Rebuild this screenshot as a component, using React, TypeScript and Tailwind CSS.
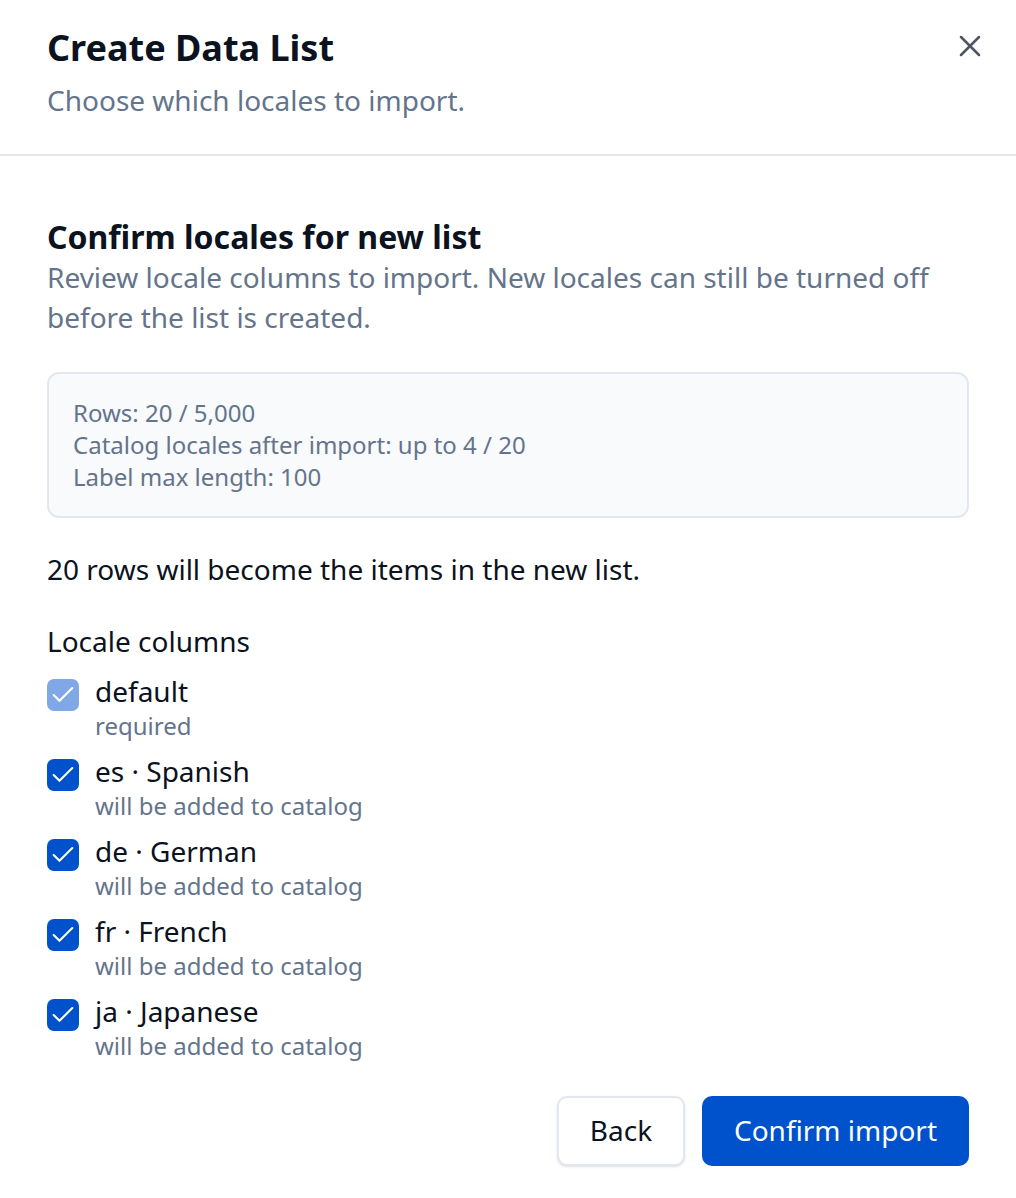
import { Check, X } from "lucide-react";

const locales = [
    { label: "default", note: "required", locked: true },
    { label: "es · Spanish", note: "will be added to catalog" },
    { label: "de · German", note: "will be added to catalog" },
    { label: "fr · French", note: "will be added to catalog" },
    { label: "ja · Japanese", note: "will be added to catalog" },
];

export default function App() {
    return (
        <div
            className="min-h-screen bg-white text-[#0b1220]"
            style={{ fontFamily: '"Noto Sans", "Open Sans", sans-serif' }}
        >
            {/* header */}
            <div className="flex items-start justify-between border-b-2 border-[#e5e7eb] px-[47px] pt-[26px] pb-[36px]">
                <div>
                    <h1 className="text-[36px] font-bold leading-[44px]">Create Data List</h1>
                    <p className="mt-[12px] text-[28px] leading-[36px] text-[#64748b]">Choose which locales to import.</p>
                </div>
                <button className="mt-[2px] -mr-[19px] flex h-[36px] w-[36px] items-center justify-center text-[#4b5563]">
                    <X className="h-[36px] w-[36px]" strokeWidth={1.7} />
                </button>
            </div>

            {/* body */}
            <div className="px-[47px] pt-[61px] pb-[31px]">
                <h2 className="text-[32px] font-bold leading-[40px]">Confirm locales for new list</h2>
                <p className="text-[28px] leading-[40px] text-[#64748b]">
                    Review locale columns to import. New locales can still be turned off before the list is created.
                </p>

                <div className="mt-[35px] rounded-[12px] border-2 border-[#e2e8f0] bg-[#f8fafc] px-[24px] pt-[23px] pb-[23px] text-[24px] leading-[32px] text-[#64748b]">
                    <div>Rows: 20 / 5,000</div>
                    <div>Catalog locales after import: up to 4 / 20</div>
                    <div>Label max length: 100</div>
                </div>

                <p className="mt-[33px] text-[28px] leading-[36px]">20 rows will become the items in the new list.</p>

                <p className="mt-[36px] text-[28px] leading-[36px]">Locale columns</p>

                <div className="mt-[14px] flex flex-col gap-[12px]">
                    {locales.map((l) => (
                        <div key={l.label} className="flex items-start gap-[16px]">
                            <span
                                className={
                                    "mt-[6px] flex h-[32px] w-[32px] shrink-0 items-center justify-center rounded-[7px] text-white " +
                                    (l.locked ? "bg-[#80a8e6]" : "bg-[#0052cc]")
                                }
                            >
                                <Check className="h-[28px] w-[28px]" strokeWidth={1.8} />
                            </span>
                            <div>
                                <div className="text-[28px] leading-[36px]">{l.label}</div>
                                <div className="pt-[1px] text-[24px] leading-[31px] text-[#64748b]">{l.note}</div>
                            </div>
                        </div>
                    ))}
                </div>

                <div className="mt-[35px] flex justify-end gap-[17px]">
                    <button className="h-[70px] w-[128px] rounded-[10px] border-2 border-[#e2e8f0] bg-white pb-[3px] text-[28px] shadow-sm">
                        Back
                    </button>
                    <button className="h-[70px] w-[267px] rounded-[10px] bg-[#0052cc] pb-[3px] text-[28px] text-white">
                        Confirm import
                    </button>
                </div>
            </div>
        </div>
    );
}
